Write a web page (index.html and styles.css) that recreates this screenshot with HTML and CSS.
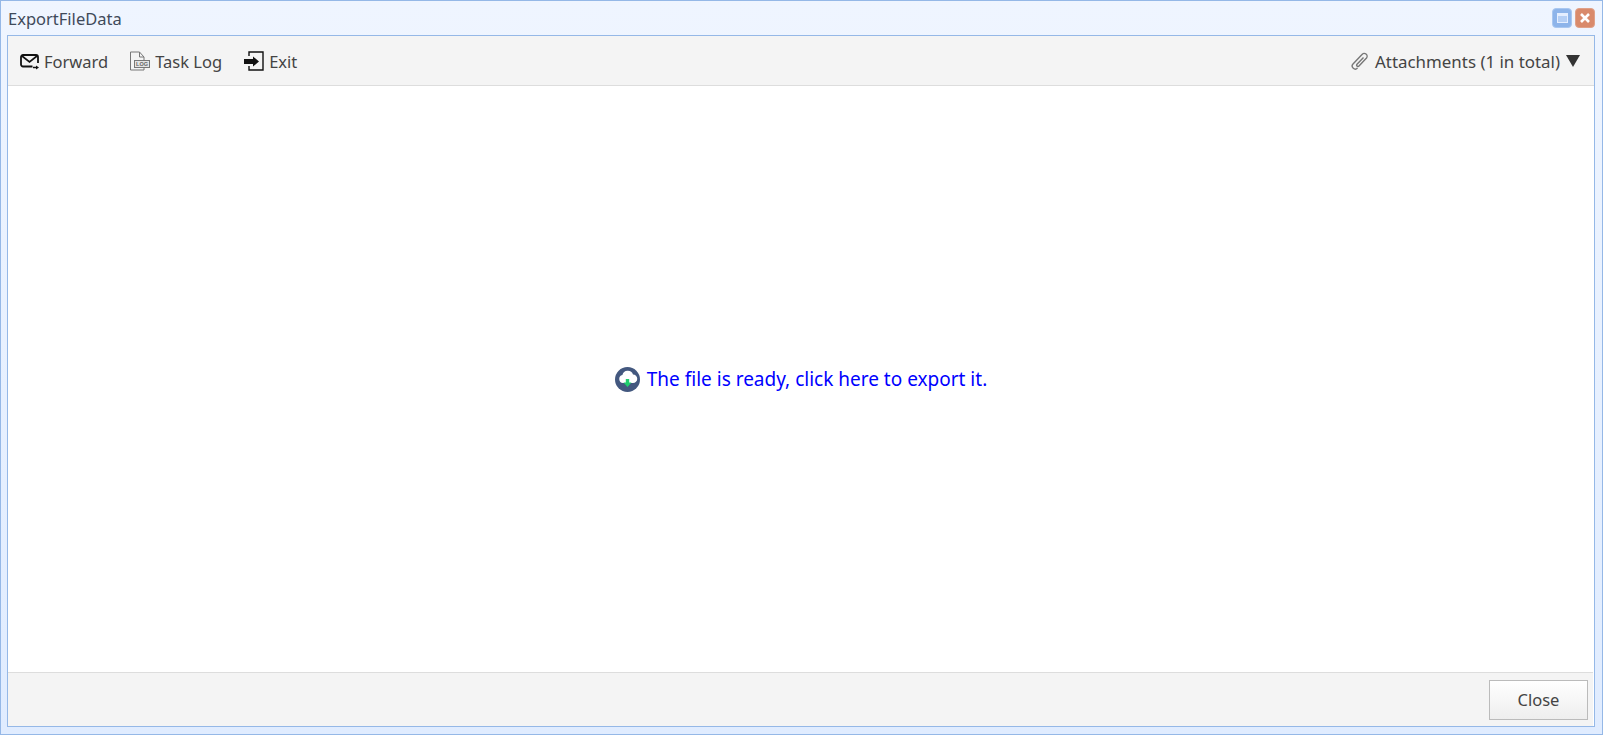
FILE: index.html
```html
<!DOCTYPE html>
<html lang="en">
<head>
<meta charset="utf-8">
<title>ExportFileData</title>
<link rel="stylesheet" href="styles.css">
</head>
<body>
<div class="window">
  <header class="titlebar">
    <span class="title">ExportFileData</span>
    <div class="win-tools">
      <span class="win-btn win-max"><span class="max-glyph"></span></span>
      <span class="win-btn win-close">
        <svg width="12" height="12" viewBox="0 0 12 12"><path d="M2 2l8 8M10 2l-8 8" stroke="#fff" stroke-width="2.6" fill="none"/></svg>
      </span>
    </div>
  </header>
  <div class="panel">
    <div class="toolbar">
      <a class="tool">
        <svg class="ico" width="20" height="20" viewBox="-1 0 20 20">
          <path d="M12.500 15.500H3a2 2 0 0 1-2-2V6a2 2 0 0 1 2-2h13a2 2 0 0 1 2 2v6" fill="none" stroke="#111" stroke-width="1.800"/>
          <path d="M2 5l7.500 6L17 5" fill="none" stroke="#111" stroke-width="1.700"/>
          <path d="M13 16.500h3" stroke="#111" stroke-width="1.500"/>
          <path d="M16 14.500l3 2-3 2z" fill="#111"/>
        </svg>
        <span>Forward</span>
      </a>
      <a class="tool">
        <svg class="ico" width="20" height="20" viewBox="0 0 20 20">
          <path d="M14 9V6L9.500 1H.5v18H14v-2.500M9.500 1v5H14" fill="none" stroke="#777" stroke-width="1"/>
          <rect x="4.500" y="9.500" width="15" height="7" fill="#e4e4e4" stroke="#777"/>
          <text class="log-text" x="12" y="15">LOG</text>
        </svg>
        <span>Task Log</span>
      </a>
      <a class="tool">
        <svg class="ico" width="20" height="20" viewBox="0 0 20 20">
          <path d="M5 5V1h14v18H5v-4" fill="none" stroke="#111" stroke-width="1.400"/>
          <path d="M0 8h9V5.500l6 5-6 5V13H0z" fill="#111"/>
        </svg>
        <span>Exit</span>
      </a>
      <a class="tool attachments">
        <svg class="ico-clip" width="18" height="18" viewBox="0 0 18 18">
          <path d="M6.500 16a3 3 0 0 1-4.500-4L11 2.500a2.800 2.800 0 0 1 4.500 3.500L8 14a1.300 1.300 0 0 1-2-1.700L12.500 5.500" fill="none" stroke="#777" stroke-width="1.400"/>
        </svg>
        <span>Attachments (1 in total)</span>
        <span class="caret"></span>
      </a>
    </div>
    <main class="content">
      <a class="export-link">
        <svg width="25" height="25" viewBox="0 0 25 25">
          <circle cx="12.500" cy="12.500" r="12.500" fill="#43587f"/>
          <path d="M8 16a4 4 0 0 1-.6-7.900 5.500 5.500 0 0 1 10.600-.6 4.200 4.200 0 0 1 0 8.500z" fill="#fff"/>
          <path d="M10.800 12h3.400v3.500h2.300L12.500 20l-4-4.500h2.300z" fill="#1fce6d"/>
        </svg>
        <span>The file is ready, click here to export it.</span>
      </a>
    </main>
    <footer class="footer">
      <button class="close-btn" type="button">Close</button>
    </footer>
  </div>
</div>
</body>
</html>
```
FILE: styles.css
```css
* { box-sizing: border-box; }
html, body { height: 100%; }
body {
  margin: 0;
  font-family: "Noto Sans", "Open Sans", sans-serif;
  color: #444;
  overflow: hidden;
}
.window {
  height: 735px;
  display: flex;
  flex-direction: column;
  border: 1px solid #95b8e7;
  background: linear-gradient(to bottom, #eff5ff 0, #e0ecff 100%);
  padding: 0 7px 7px 6px;
}
.titlebar {
  height: 34px;
  flex: none;
  display: flex;
  align-items: center;
  justify-content: space-between;
}
.title { font-size: 16.5px; color: #3f4a5a; padding-left: 1px; }
.win-tools { display: flex; gap: 3px; }
.win-btn {
  width: 20px;
  height: 20px;
  border-radius: 4px;
  display: flex;
  align-items: center;
  justify-content: center;
}
.win-max { background: #8db4ea; border: 1px solid #a9c7f0; }
.max-glyph { width: 11px; height: 10px; border: 1px solid #e4eeff; border-top-width: 3px; background: #b5cff5; }
.win-close { background: #d98a6b; border: 1px solid #e0a188; }
.panel {
  flex: 1;
  min-height: 0;
  display: flex;
  flex-direction: column;
  border: 1px solid #95b8e7;
  background: #fff;
}
.toolbar {
  height: 50px;
  flex: none;
  display: flex;
  align-items: center;
  padding: 1px 14px 0 11px;
  gap: 22px;
  background: #f4f4f4;
  border-bottom: 1px solid #ddd;
  font-size: 16.5px;
}
.tool { display: flex; align-items: center; gap: 5px; color: #444; }
.log-text { font-size: 5.500px; font-weight: 700; fill: #666; text-anchor: middle; font-family: "Liberation Sans", sans-serif; }
.attachments { margin-left: auto; gap: 6px; font-size: 16.9px; }
.caret {
  width: 0;
  height: 0;
  border-left: 7px solid transparent;
  border-right: 7px solid transparent;
  border-top: 12px solid #333;
}
.content {
  flex: 1;
  min-height: 0;
  display: flex;
  align-items: center;
  justify-content: center;
}
.export-link {
  display: flex;
  align-items: center;
  gap: 7px;
  color: #0000ff;
  font-size: 19px;
}
.footer {
  height: 54px;
  flex: none;
  display: flex;
  align-items: center;
  justify-content: flex-end;
  padding-right: 5px;
  margin-right: 1px;
  background: #f4f4f4;
  border-top: 1px solid #ddd;
}
.close-btn {
  width: 99px;
  height: 40px;
  border: 1px solid #bbb;
  background: linear-gradient(to bottom, #fff 0, #eee 100%);
  color: #444;
  font: inherit;
  font-size: 16.5px;
  padding: 0;
}
```
